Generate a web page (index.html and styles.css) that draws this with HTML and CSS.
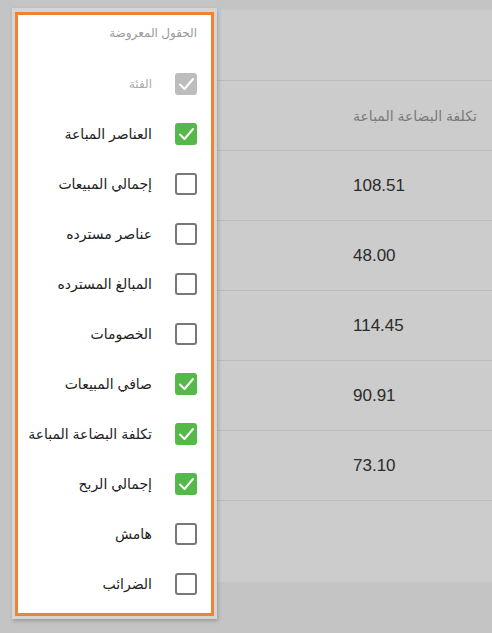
FILE: index.html
```html
<!DOCTYPE html>
<html lang="ar">
<head>
<meta charset="utf-8">
<title>Fields</title>
<link rel="stylesheet" href="styles.css">
</head>
<body>
<div class="card">
  <div class="row row-top"></div>
  <div class="row row-head"><span class="cell head-cell">تكلفة البضاعة المباعة</span></div>
  <div class="row"><span class="cell">108.51</span></div>
  <div class="row"><span class="cell">48.00</span></div>
  <div class="row"><span class="cell">114.45</span></div>
  <div class="row"><span class="cell">90.91</span></div>
  <div class="row"><span class="cell">73.10</span></div>
  <div class="row row-last"></div>
</div>

<div class="panel">
  <div class="panel-inner" dir="rtl">
    <div class="panel-title">الحقول المعروضة</div>
    <ul class="list">
      <li class="item disabled"><span class="box checked"><svg viewBox="0 0 22 22"><polyline points="5,11.5 9.5,16 18,6"/></svg></span><span class="label">الفئة</span></li>
      <li class="item"><span class="box checked"><svg viewBox="0 0 22 22"><polyline points="5,11.5 9.5,16 18,6"/></svg></span><span class="label">العناصر المباعة</span></li>
      <li class="item"><span class="box"></span><span class="label">إجمالي المبيعات</span></li>
      <li class="item"><span class="box"></span><span class="label">عناصر مسترده</span></li>
      <li class="item"><span class="box"></span><span class="label">المبالغ المسترده</span></li>
      <li class="item"><span class="box"></span><span class="label">الخصومات</span></li>
      <li class="item"><span class="box checked"><svg viewBox="0 0 22 22"><polyline points="5,11.5 9.5,16 18,6"/></svg></span><span class="label">صافي المبيعات</span></li>
      <li class="item"><span class="box checked"><svg viewBox="0 0 22 22"><polyline points="5,11.5 9.5,16 18,6"/></svg></span><span class="label">تكلفة البضاعة المباعة</span></li>
      <li class="item"><span class="box checked"><svg viewBox="0 0 22 22"><polyline points="5,11.5 9.5,16 18,6"/></svg></span><span class="label">إجمالي الربح</span></li>
      <li class="item"><span class="box"></span><span class="label">هامش</span></li>
      <li class="item"><span class="box"></span><span class="label">الضرائب</span></li>
    </ul>
  </div>
</div>
</body>
</html>
```

FILE: styles.css
```css
html, body {
  margin: 0;
  padding: 0;
}
body {
  width: 492px;
  height: 633px;
  overflow: hidden;
  background: #c4c4c4;
  font-family: "Liberation Sans", "DejaVu Sans", Arial, sans-serif;
  position: relative;
}
.card {
  margin: 10px 0 0 12px;
  height: 572px;
  background: #cccccc;
  display: flex;
  flex-direction: column;
}
.row {
  height: 70px;
  box-sizing: border-box;
  border-bottom: 1px solid #bcbcbc;
  display: flex;
  align-items: center;
  padding-left: 341px;
  flex: none;
}
.row-top {
  height: 71px;
}
.row-last {
  border-bottom: none;
  flex: 1;
}
.cell {
  font-size: 17px;
  color: #2b2b2b;
}
.head-cell {
  font-size: 14px;
  color: #7a7a7a;
}
.panel {
  position: absolute;
  left: 12px;
  top: 8px;
  width: 205px;
  height: 611px;
  box-sizing: border-box;
  padding: 4px 3px 3px 3px;
  background: #d5d5d5;
  box-shadow: 1px 2px 4px rgba(0, 0, 0, 0.22);
}
.panel-inner {
  height: 100%;
  box-sizing: border-box;
  border: 3px solid #f08231;
  background: #ffffff;
  padding: 10px 14px 0 0;
}
.panel-title {
  font-size: 12px;
  line-height: 16px;
  color: #9a9a9a;
  margin-bottom: 18px;
}
.list {
  list-style: none;
  margin: 0;
  padding: 0;
}
.item {
  height: 50px;
  display: flex;
  align-items: center;
  gap: 23px;
}
.box {
  width: 22px;
  height: 22px;
  box-sizing: border-box;
  border: 2px solid #777777;
  border-radius: 3px;
  background: #ffffff;
  flex: none;
  display: flex;
}
.box svg {
  width: 22px;
  height: 22px;
  flex: none;
}
.box polyline {
  fill: none;
  stroke: #ffffff;
  stroke-width: 2;
  stroke-linecap: round;
  stroke-linejoin: round;
}
.box.checked {
  border: none;
  background: #54b948;
}
.label {
  font-size: 14px;
  color: #222222;
}
.disabled .box.checked {
  background: #bdbdbd;
}
.disabled .label {
  font-size: 12px;
  color: #ababab;
}
```
